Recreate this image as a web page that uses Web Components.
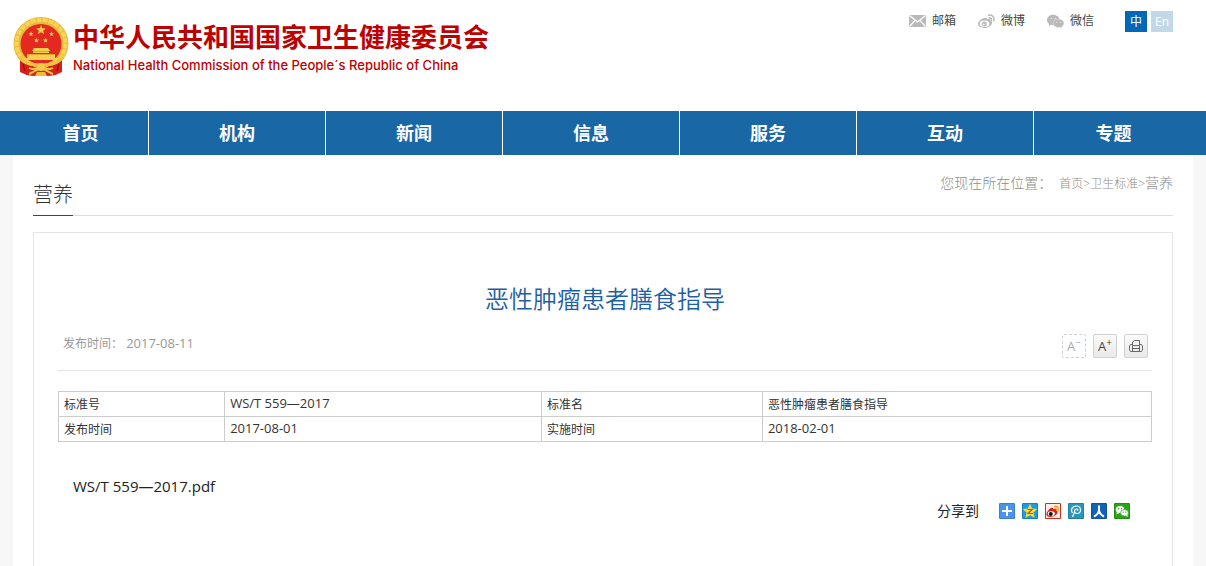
<!DOCTYPE html>
<html lang="zh-CN">
<head>
<meta charset="utf-8">
<meta name="viewport" content="width=device-width, initial-scale=1">
<title>恶性肿瘤患者膳食指导</title>
<style>
    body{
        margin: 0;
        background: #fff;
        color: #333;
        font: 12px/24px "Open Sans", "Noto Sans CJK SC", sans-serif;
    }
</style>
</head>
<body>

<site-header>
    <site-brand slot="brand">
        中华人民共和国国家卫生健康委员会
        <span slot="english">National Health Commission of the People´s Republic of China</span>
    </site-brand>
    <top-link icon="mail">邮箱</top-link>
    <top-link icon="weibo">微博</top-link>
    <top-link icon="wechat">微信</top-link>
    <lang-switch slot="lang"></lang-switch>
</site-header>

<site-nav items="首页,机构,新闻,信息,服务,互动,专题"></site-nav>

<page-body>
    <section-head>
        营养
        <bread-crumb slot="crumb"></bread-crumb>
    </section-head>
    <article-box>
        <span slot="title">恶性肿瘤患者膳食指导</span>
        <span slot="date">2017-08-11</span>
        <text-tools slot="tools"></text-tools>
        <standard-table></standard-table>
        <file-link>WS/T 559—2017.pdf</file-link>
        <share-bar>分享到</share-bar>
    </article-box>
</page-body>

<script>
// attach an open root and fill it from a template
function render(el, html){
    const template = document.createElement('template');
    template.innerHTML = html;
    el.attachShadow({mode:'open'}).appendChild(template.content.cloneNode(true));
}

const star = (x, y, r) => {
    let points = [];
    for(let i = 0; i < 10; i++){
        const a = Math.PI * i / 5 - Math.PI / 2;
        const k = i % 2 ? r * 0.45 : r;
        points.push((x + k * Math.cos(a)).toFixed(2) + ',' + (y + k * Math.sin(a)).toFixed(2));
    }
    return `<polygon points="${points.join(' ')}"/>`;
}

const topIcons = {
    mail: `<path d="M0 2h17v12H0z" fill="#b9b9b9"/>
        <path d="M.5 2.500l8 6.500 8-6.500M.5 13.500l5.500-6M16.500 13.500l-5.500-6" fill="none" stroke="#fff" stroke-width="1.200"/>`,
    weibo: `<path d="M6.500 5c1-.5 2.600-.5 2.300 1.500 2-.8 4.300-.7 3.600 1.300 1.600.4 2.100 1.500 1.600 2.700C13 13.200 9.800 15 6.300 15 2.900 15 0 13.200 0 10.800 0 8.500 3.700 5.600 6.500 5z" fill="#b9b9b9"/>
        <ellipse cx="6.500" cy="10.700" rx="4.800" ry="3.300" fill="#fff"/>
        <circle cx="6.300" cy="11" r="2.500" fill="#b9b9b9"/><circle cx="5.700" cy="11.400" r=".9" fill="#fff"/>
        <path d="M10.500 2.300c3.500-1 6.300 1.800 5.200 5.500M11 4.900c1.700-.4 2.900.8 2.400 2.400" fill="none" stroke="#b9b9b9" stroke-width="1.500" stroke-linecap="round"/>`,
    wechat: `<path d="M6.200 1.800C2.800 1.800 0 4 0 6.900c0 1.600.9 3 2.200 3.900L1.700 13l2.400-1.300c.7.200 1.400.3 2.100.3 3.500 0 6.300-2.300 6.300-5.100S9.700 1.800 6.200 1.800z" fill="#b9b9b9"/>
        <path d="M11.500 6.100c-3.100 0-5.500 1.900-5.500 4.200 0 2.400 2.400 4.300 5.500 4.300.6 0 1.200-.1 1.800-.3l2 1.200-.5-1.900c1.300-.8 2.200-2 2.200-3.300 0-2.300-2.500-4.200-5.500-4.200z" fill="#b9b9b9" stroke="#fff" stroke-width=".4"/>
        <g fill="#fff"><circle cx="4.200" cy="5.500" r=".6"/><circle cx="8.200" cy="5.500" r=".6"/><circle cx="9.700" cy="9.300" r=".5"/><circle cx="13.300" cy="9.300" r=".5"/></g>`
};

class SiteHeader extends HTMLElement{
    constructor(){
        super()
        render(this, `
            <style>
                :host{ display: block; }
                header{
                    display: flex;
                    justify-content: space-between;
                    align-items: flex-start;
                    box-sizing: border-box;
                    max-width: 1180px;
                    min-height: 111px;
                    margin: 0 auto;
                    padding: 0 20px 0 0;
                }
                .tools{
                    display: flex;
                    align-items: center;
                    gap: 22px;
                    padding-top: 10px;
                }
                slot[name=lang]{ display: block; margin-left: 9px; }
            </style>
            <header>
                <slot name="brand"></slot>
                <div class="tools"><slot></slot><slot name="lang"></slot></div>
            </header>`);
    }
}

class SiteBrand extends HTMLElement{
    constructor(){
        super()
        render(this, `
            <style>
                :host{ display: block; }
                a{
                    display: flex;
                    gap: 4px;
                    padding-top: 17px;
                    color: #bd0000;
                    text-decoration: none;
                }
                svg{ flex: none; width: 56px; height: 60px; }
                .name{ font-size: 26px; font-weight: 700; line-height: 40px; }
                .english{ font: 500 13px/16px Inter, "Liberation Sans", sans-serif; }
            </style>
            <a href="#">
                <svg viewBox="0 0 56 60" aria-hidden="true">
                    <path d="M7 41l1 14 6 3 9 1h10l9-1 6-3 1-14z" fill="#cf1f1a"/>
                    <ellipse cx="28" cy="26.500" rx="27.500" ry="26.500" fill="#e9b93a"/>
                    <ellipse cx="28" cy="26.500" rx="24.500" ry="23.500" fill="none" stroke="#f6d556" stroke-width="4" stroke-dasharray="5 1"/>
                    <ellipse cx="28" cy="27" rx="20.500" ry="20" fill="#e32a20"/>
                    <g fill="#f5cf4d">
                        ${star(28, 13, 5)}${star(18, 17, 2.6)}${star(38.5, 17, 2.6)}${star(23.500, 23.500, 2.6)}${star(32.500, 23.500, 2.6)}
                        <path d="M21 31h14l2 3H19zM20 34h16v2H20zM14 37h28v4H14zM10 41h36v2H10z"/>
                    </g>
                    <path d="M20 34.500h16M14 37.500h28" stroke="#d8891c" stroke-width=".6"/>
                    <path d="M7 41c4 1 6 5 10 7l5 2 6-2 6 2 5-2c4-2 6-6 10-7v14l-7 3-9 1-5-4-5 4-9-1-7-3z" fill="#d6201b"/>
                    <path d="M6 40c5 7 12 8 22 8s17-1 22-8" fill="none" stroke="#efc240" stroke-width="3"/>
                    <path d="M16 51c5 3 8-1 12-1s7 4 12 1M16 57c4-1 6-5 12-5s8 4 12 5" fill="none" stroke="#f2c43d" stroke-width="2"/>
                    <path d="M22 59l2-4h8l2 4z" fill="#edbd3c"/>
                    <circle cx="28" cy="50" r="4" fill="#f3cb48"/>
                    <path d="M10 47l2 7M46 47l-2 7" fill="none" stroke="#a80d0b" stroke-width="1.500"/>
                </svg>
                <span>
                    <div class="name"><slot></slot></div>
                    <div class="english"><slot name="english"></slot></div>
                </span>
            </a>`);
    }
}

class TopLink extends HTMLElement{
    constructor(){
        super()
        render(this, `
            <style>
                :host{ display: block; }
                a{
                    display: flex;
                    align-items: center;
                    gap: 6px;
                    line-height: 22px;
                    color: #444;
                    text-decoration: none;
                }
                svg{ width: 17px; height: 16px; }
            </style>
            <a href="#"><svg viewBox="0 0 17 16" aria-hidden="true">${topIcons[this.getAttribute('icon')]}</svg><slot></slot></a>`);
    }
}

class LangSwitch extends HTMLElement{
    constructor(){
        super()
        render(this, `
            <style>
                :host{ display: flex; gap: 4px; }
                a{
                    width: 22px;
                    line-height: 21px;
                    text-align: center;
                    color: #fff;
                    background: #c2d8e9;
                    text-decoration: none;
                }
                a.on{ background: #0068b7; }
            </style>
            <a class="on" href="#">中</a><a href="#">En</a>`);
    }
}

class SiteNav extends HTMLElement{
    constructor(){
        super()
        const links = this.getAttribute('items').split(',').map(item => `<a href="#">${item}</a>`).join('');
        render(this, `
            <style>
                :host{ display: block; background: #1a67a6; }
                nav{
                    display: grid;
                    grid-template-columns: 136fr repeat(5, 177fr) 159fr;
                    max-width: 1180px;
                    margin: 0 auto;
                }
                a{
                    border-right: 1px solid #fff;
                    font-size: 18px;
                    font-weight: 700;
                    line-height: 44px;
                    text-align: center;
                    color: #fff;
                    text-decoration: none;
                }
                a:last-child{ border-right: 0; }
            </style>
            <nav>${links}</nav>`);
    }
}

class PageBody extends HTMLElement{
    constructor(){
        super()
        render(this, `
            <style>
                :host{ display: block; background: #f7f7f7; }
                main{
                    box-sizing: border-box;
                    max-width: 1180px;
                    margin: 0 auto;
                    padding: 0 20px;
                    background: #fff;
                }
            </style>
            <main><slot></slot></main>`);
    }
}

class SectionHead extends HTMLElement{
    constructor(){
        super()
        render(this, `
            <style>
                :host{
                    display: flex;
                    justify-content: space-between;
                    align-items: flex-start;
                    padding-top: 16px;
                    border-bottom: 1px solid #ddd;
                }
                h2{
                    margin: 0 0 -1px;
                    padding-top: 4px;
                    border-bottom: 1px solid #14508f;
                    font-size: 20px;
                    font-weight: 300;
                    line-height: 40px;
                }
            </style>
            <h2><slot></slot></h2>
            <slot name="crumb"></slot>`);
    }
}

class BreadCrumb extends HTMLElement{
    constructor(){
        super()
        render(this, `
            <style>
                :host{ display: block; color: #8c8c8c; font-size: 14px; font-weight: 300; }
                nav{ display: flex; align-items: baseline; }
                a{ color: inherit; text-decoration: none; }
                .path{ margin-left: 7px; font-size: 12px; }
            </style>
            <nav>您现在所在位置：<span class="path"><a href="#">首页</a>&gt;<a href="#">卫生标准</a>&gt;</span><a href="#">营养</a></nav>`);
    }
}

class ArticleBox extends HTMLElement{
    constructor(){
        super()
        render(this, `
            <style>
                :host{
                    display: block;
                    margin-top: 16px;
                    padding: 46px 20px 60px 24px;
                    border: 1px solid #e5e5e5;
                }
                h1{
                    margin: 0;
                    font-size: 24px;
                    font-weight: 350;
                    line-height: 40px;
                    text-align: center;
                    color: #1f5fa3;
                }
                .meta{
                    display: flex;
                    justify-content: space-between;
                    padding: 12px 4px 12px 5px;
                    border-bottom: 1px solid #e5e5e5;
                    color: #999;
                }
                slot[name=date]{ font-size: 13px; }
                slot[name=tools]{ display: block; padding-top: 3px; }
            </style>
            <h1><slot name="title"></slot></h1>
            <div class="meta">
                <div>发布时间： <slot name="date"></slot></div>
                <slot name="tools"></slot>
            </div>
            <slot></slot>`);
    }
}

class TextTools extends HTMLElement{
    constructor(){
        super()
        render(this, `
            <style>
                :host{ display: flex; gap: 7px; }
                button{
                    display: flex;
                    align-items: center;
                    justify-content: center;
                    box-sizing: border-box;
                    width: 24px;
                    height: 24px;
                    padding: 0;
                    border: 1px solid #d0d0d0;
                    border-radius: 2px;
                    background: linear-gradient(#fbfbfb, #e9e9e9);
                    font: 13px/24px "Open Sans", sans-serif;
                    color: #444;
                }
                button.off{ border-style: dashed; background: #fff; color: #aaa; }
                sup{ font-size: 10px; line-height: 14px; align-self: flex-start; }
                svg{ width: 14px; height: 14px; }
            </style>
            <button class="off" aria-label="缩小字体">A<sup>−</sup></button>
            <button aria-label="放大字体">A<sup>+</sup></button>
            <button aria-label="打印">
                <svg viewBox="0 0 14 14" fill="none" stroke="#666" aria-hidden="true">
                    <path d="M3.500 6.500V3l2-1.500h5v5M3.500 6.500h7v6h-7zM3.500 9.500h7M3 5.500H1.500L.5 7v4l1 1.500h2M11 5.500h1.500l1 1.500v4l-1 1.500h-2"/>
                </svg>
            </button>`);
    }
}

class StandardTable extends HTMLElement{
    constructor(){
        super()
        render(this, `
            <style>
                :host{ display: block; margin-top: 20px; }
                table{
                    width: 100%;
                    table-layout: fixed;
                    border-collapse: collapse;
                }
                th, td{
                    height: 22px;
                    padding: 2px 5px 0;
                    border: 1px solid #ccc;
                    font-weight: 400;
                    line-height: 22px;
                    text-align: left;
                }
                .num{ padding: 0 5px 2px; font-size: 13px; }
                col:nth-child(1){ width: 15.2%; }
                col:nth-child(2){ width: 29%; }
                col:nth-child(3){ width: 20.2%; }
            </style>
            <table>
                <colgroup><col><col><col><col></colgroup>
                <tr><th scope="row">标准号</th><td class="num">WS/T 559—2017</td><th scope="row">标准名</th><td>恶性肿瘤患者膳食指导</td></tr>
                <tr><th scope="row">发布时间</th><td class="num">2017-08-01</td><th scope="row">实施时间</th><td class="num">2018-02-01</td></tr>
            </table>`);
    }
}

class FileLink extends HTMLElement{
    constructor(){
        super()
        render(this, `
            <style>
                :host{ display: block; padding: 32px 15px 0; font-size: 15px; }
                a{ color: #222; text-decoration: none; }
            </style>
            <a href="#"><slot></slot></a>`);
    }
}

class ShareBar extends HTMLElement{
    constructor(){
        super()
        const icons = [
            ['更多', '#4a94ec', '<path d="M8 3v10M3 8h10" stroke="#fff" stroke-width="2"/>'],
            ['QQ空间', '#1b9be0', `<g fill="#ffd83a" stroke="#ffd83a" stroke-width=".8" stroke-linejoin="round">${star(8, 8.5, 7)}</g><path d="M5.500 6.500h4.500l-4 4h5" fill="none" stroke="#a86500" stroke-width="1.200"/>`],
            ['新浪微博', '#e63c2c', `<path d="M1 1h14v14H1z" fill="#fbeeea"/><path d="M6 5c1.500-.7 2.500 0 2.200 1.300 2-.7 3.500-.2 3 1.300 1.500.4 1.800 1.600.8 3.200C10.500 13 7.500 14 5 14c-2.400 0-4-1.500-3.500-3.500C2 8.500 4 6 6 5z" fill="#d8201c"/>
                <ellipse cx="6.300" cy="10.700" rx="3.500" ry="2.400" fill="#fff"/><circle cx="5.800" cy="11" r="2" fill="#111"/>
                <path d="M9 3.500c3-1 5 1 4 4.500M9.500 5.500c1.500-.4 2.300.5 2 2" fill="none" stroke="#f39a1d" stroke-width="1.300"/>`],
            ['腾讯微博', '#2a95bd', '<path d="M4.500 10C2.500 7 4 3 8.200 3c3 0 4.300 2 4.300 4S11 10.500 9 10.500 6.500 9 6.500 8s.7-2 2-2 1.500 1 1 1.800M4.500 14l2.500-6" fill="none" stroke="#fff" stroke-width="1.200"/>'],
            ['人人网', '#1263b5', '<path d="M8 2.500v4C8 10 6 12 3 13.500M8 6.500c0 3.500 2 5.500 5 7" fill="none" stroke="#fff" stroke-width="2"/>'],
            ['微信', '#2aa515', `<ellipse cx="6" cy="6.500" rx="4.300" ry="3.600" fill="#fff"/><path d="M3 9l-.5 2.500 3-1.500z" fill="#fff"/>
                <ellipse cx="10.500" cy="9.800" rx="3.900" ry="3.200" fill="#fff" stroke="#2aa515" stroke-width=".7"/><path d="M11.500 12.500l2 1.500v-3z" fill="#fff"/>
                <g fill="#2aa515"><circle cx="4.500" cy="5.700" r=".7"/><circle cx="7.500" cy="5.700" r=".7"/><circle cx="9.300" cy="9.200" r=".6"/><circle cx="11.800" cy="9.200" r=".6"/></g>`]
        ];
        render(this, `
            <style>
                :host{
                    display: flex;
                    justify-content: flex-end;
                    align-items: center;
                    padding: 1px 22px 0 0;
                    color: #222;
                    font-size: 14px;
                }
                .icons{ display: flex; gap: 7px; margin-left: 20px; }
                svg{ display: block; width: 16px; height: 16px; }
            </style>
            <slot></slot>
            <div class="icons">${icons.map(([name, color, shape]) => `
                <a href="#" aria-label="${name}"><svg viewBox="0 0 16 16" aria-hidden="true">
                    <rect width="16" height="16" rx="1" fill="${color}"/>${shape}
                    <rect x=".5" y=".5" width="15" height="15" rx="1" fill="none" stroke="#000" stroke-opacity=".15"/>
                </svg></a>`).join('')}
            </div>`);
    }
}

window.customElements.define('site-header', SiteHeader)
window.customElements.define('site-brand', SiteBrand)
window.customElements.define('top-link', TopLink)
window.customElements.define('lang-switch', LangSwitch)
window.customElements.define('site-nav', SiteNav)
window.customElements.define('page-body', PageBody)
window.customElements.define('section-head', SectionHead)
window.customElements.define('bread-crumb', BreadCrumb)
window.customElements.define('article-box', ArticleBox)
window.customElements.define('text-tools', TextTools)
window.customElements.define('standard-table', StandardTable)
window.customElements.define('file-link', FileLink)
window.customElements.define('share-bar', ShareBar)
</script>
</body>
</html>
